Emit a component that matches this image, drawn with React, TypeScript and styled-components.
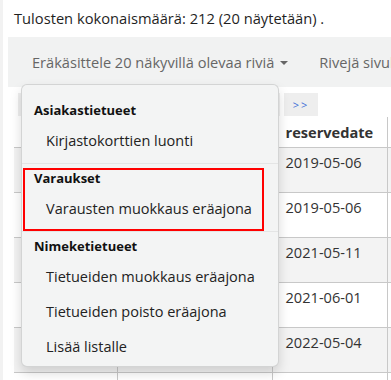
import React from "react";
import styled, { createGlobalStyle } from "styled-components";

const GlobalStyle = createGlobalStyle`
  html, body { margin: 0; padding: 0; background: #fff; }
  body {
    font-family: "Open Sans", "Noto Sans", "Liberation Sans", sans-serif;
    color: #222;
    overflow: hidden;
  }
`;

const Page = styled.div`
  position: relative;
  width: 391px;
  height: 380px;
  overflow: hidden;
  border-left: 3px solid #f2f2f2;
  box-sizing: border-box;
`;

const Summary = styled.div`
  padding: 7px 0 0 11px;
  height: 30px;
  box-sizing: border-box;
  font-size: 14.7px;
  line-height: 22px;
  color: #1f1f1f;
  white-space: nowrap;
`;

const Toolbar = styled.div`
  margin: 7px 0 0 5px;
  height: 50px;
  width: 600px;
  background: #f1f2f2;
  display: flex;
  align-items: center;
  padding-left: 24px;
  gap: 31px;
  white-space: nowrap;
  font-size: 14.6px;
  color: #666;
`;

const ToolbarItem = styled.span`
  display: inline-flex;
  align-items: center;
  gap: 6px;
`;

const Caret = styled.span`
  width: 0;
  height: 0;
  border-left: 4px solid transparent;
  border-right: 4px solid transparent;
  border-top: 4px solid #666;
  margin-top: 2px;
`;

const Pager = styled.div`
  display: flex;
  gap: 4px;
  margin: 6px 0 0 15px;
  height: 23px;
`;

const PagerBlock = styled.div<{ $w: number }>`
  width: ${(p) => p.$w}px;
  height: 23px;
  background: #eeeeee;
  display: flex;
  align-items: center;
  justify-content: center;
  font-size: 11px;
  color: #3f6fd8;
  letter-spacing: 2px;
`;

const Table = styled.table`
  margin: 1px 0 0 11px;
  width: 473px;
  border-collapse: collapse;
  table-layout: fixed;
  font-size: 14.6px;
  color: #333;
`;

const HeadCell = styled.th<{ $w: number }>`
  width: ${(p) => p.$w}px;
  height: 30px;
  padding: 0 7px 0 13px;
  box-sizing: border-box;
  text-align: left;
  font-weight: 700;
  border-left: 1px solid #c8c8c8;
  border-right: 1px solid #c8c8c8;
  border-bottom: 1px solid #c8c8c8;
  vertical-align: middle;
  white-space: nowrap;
  overflow: hidden;
  &:first-child { border-left: none; }
`;

const Row = styled.tr<{ $odd: boolean }>`
  background: ${(p) => (p.$odd ? "#f3f3f3" : "#fff")};
`;

const Cell = styled.td`
  height: 45px;
  padding: 3px 7px 0 13px;
  box-sizing: border-box;
  vertical-align: top;
  border: 1px solid #c8c8c8;
  line-height: 22px;
  white-space: nowrap;
  &:first-child { border-left: none; }
`;

const Menu = styled.div`
  position: absolute;
  top: 84px;
  left: 18px;
  width: 258px;
  box-sizing: border-box;
  background: #f3f4f4;
  border: 1px solid rgba(0, 0, 0, 0.13);
  border-radius: 6px;
  box-shadow: 0 6px 12px rgba(0, 0, 0, 0.15);
  padding: 11px 0 2px;
`;

const GroupHeader = styled.div`
  padding: 4px 12px 3px;
  line-height: 20px;
  font-size: 13px;
  font-weight: 700;
  color: #111;
`;

const MenuItem = styled.div`
  padding: 7px 24px;
  line-height: 21px;
  font-size: 14.5px;
  color: #222;
  white-space: nowrap;
`;

const Divider = styled.div`
  height: 1px;
  margin-top: 5px;
  background: #e4e5e5;
`;

const Highlight = styled.div`
  position: absolute;
  top: 83px;
  left: 1px;
  width: 241px;
  height: 63px;
  box-sizing: border-box;
  border: 2px solid #ff0000;
  pointer-events: none;
`;

const rows = [
  "2019-05-06",
  "2019-05-06",
  "2021-05-11",
  "2021-06-01",
  "2022-05-04",
  "",
];

export default function App() {
  return (
    <>
      <GlobalStyle />
      <Page>
        <Summary>Tulosten kokonaismäärä: 212 (20 näytetään) .</Summary>
        <Toolbar>
          <ToolbarItem>
            Eräkäsittele 20 näkyvillä olevaa riviä <Caret />
          </ToolbarItem>
          <ToolbarItem>Rivejä sivulla</ToolbarItem>
        </Toolbar>
        <Pager>
          <PagerBlock $w={262}>{"<< < 1 2 3 >"}</PagerBlock>
          <PagerBlock $w={34}>{">>"}</PagerBlock>
        </Pager>
        <Table>
          <thead>
            <tr>
              <HeadCell $w={103}>cardnumber</HeadCell>
              <HeadCell $w={155}>title</HeadCell>
              <HeadCell $w={115}>reservedate</HeadCell>
              <HeadCell $w={100}>expiration</HeadCell>
            </tr>
          </thead>
          <tbody>
            {rows.map((d, i) => (
              <Row key={i} $odd={i % 2 === 0}>
                <Cell>&nbsp;</Cell>
                <Cell>&nbsp;</Cell>
                <Cell>{d}</Cell>
                <Cell>&nbsp;</Cell>
              </Row>
            ))}
          </tbody>
        </Table>
        <Menu>
          <GroupHeader>Asiakastietueet</GroupHeader>
          <MenuItem>Kirjastokorttien luonti</MenuItem>
          <Divider />
          <GroupHeader>Varaukset</GroupHeader>
          <MenuItem>Varausten muokkaus eräajona</MenuItem>
          <Divider />
          <GroupHeader>Nimeketietueet</GroupHeader>
          <MenuItem>Tietueiden muokkaus eräajona</MenuItem>
          <MenuItem>Tietueiden poisto eräajona</MenuItem>
          <MenuItem>Lisää listalle</MenuItem>
          <Highlight />
        </Menu>
      </Page>
    </>
  );
}
